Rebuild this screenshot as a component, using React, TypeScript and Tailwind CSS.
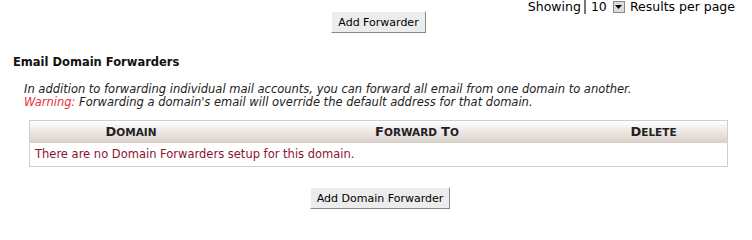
import React from 'react';

const font = { fontFamily: '"DejaVu Sans", Verdana, sans-serif' };

function GreyButton({ label }: { label: string }) {
  return (
    <button className="h-[22px] border border-t-white border-l-white border-r-[#8a8a8a] border-b-[#8a8a8a] bg-[#ececec] px-[6px] text-[11px] leading-none text-black">
      {label}
    </button>
  );
}

// hand-made small caps: first letter large, rest smaller uppercase
function SmallCaps({ text }: { text: string }) {
  return (
    <span>
      {text.split(' ').map((w, i) => (
        <span key={i}>
          {i > 0 && ' '}
          <span className="text-[13px]">{w[0]}</span>
          <span className="text-[10.5px] uppercase">{w.slice(1)}</span>
        </span>
      ))}
    </span>
  );
}

export default function App() {
  return (
    <div style={font} className="w-[752px] h-[216px] overflow-hidden bg-white text-[11.5px] text-black">
      {/* pager */}
      <div className="flex h-[14px] items-center justify-end pr-[17px] text-[12.5px] leading-[14px]">
        <span className="mr-[3px]">Showing</span>
        <div className="flex h-[14px] items-center border-l-2 border-[#777] pl-[5px]">
          <span className="w-[22px]">10</span>
          <span className="flex h-[12px] w-[12px] items-center justify-center border border-[#888] bg-[#dcdcdc]">
            <svg width="7" height="4" viewBox="0 0 7 4">
              <path d="M0 0h7L3.5 4z" fill="#000" />
            </svg>
          </span>
        </div>
        <span className="ml-[5px]">Results per page</span>
      </div>

      <div className="-mt-[3px] flex justify-center pl-[5px]">
        <GreyButton label="Add Forwarder" />
      </div>

      <h3 className="mt-[22px] pl-[13px] text-[11.5px] font-bold leading-[15px] text-[#111]">Email Domain Forwarders</h3>

      <div className="mt-[13px] pl-[24px] italic leading-[13px] text-[#222]">
        <p>In addition to forwarding individual mail accounts, you can forward all email from one domain to another.</p>
        <p>
          <span className="text-[#e8303c]">Warning:</span> Forwarding a domain's email will override the default address for that domain.
        </p>
      </div>

      <div className="ml-[29px] mt-[11px] w-[699px] border border-[#cfcfcf]">
        <div className="grid h-[22px] grid-cols-[224px_326px_1fr] items-center bg-gradient-to-b from-white to-[#d9cfc8] font-bold text-[#222]">
          <div className="pr-[22px] text-center"><SmallCaps text="Domain" /></div>
          <div className="text-center"><SmallCaps text="Forward To" /></div>
          <div className="text-center"><SmallCaps text="Delete" /></div>
        </div>
        <div className="flex h-[23px] items-center px-[5px] text-[#8a1431]">
          There are no Domain Forwarders setup for this domain.
        </div>
      </div>

      <div className="mt-[20px] flex justify-center pl-[8px]">
        <GreyButton label="Add Domain Forwarder" />
      </div>
    </div>
  );
}
